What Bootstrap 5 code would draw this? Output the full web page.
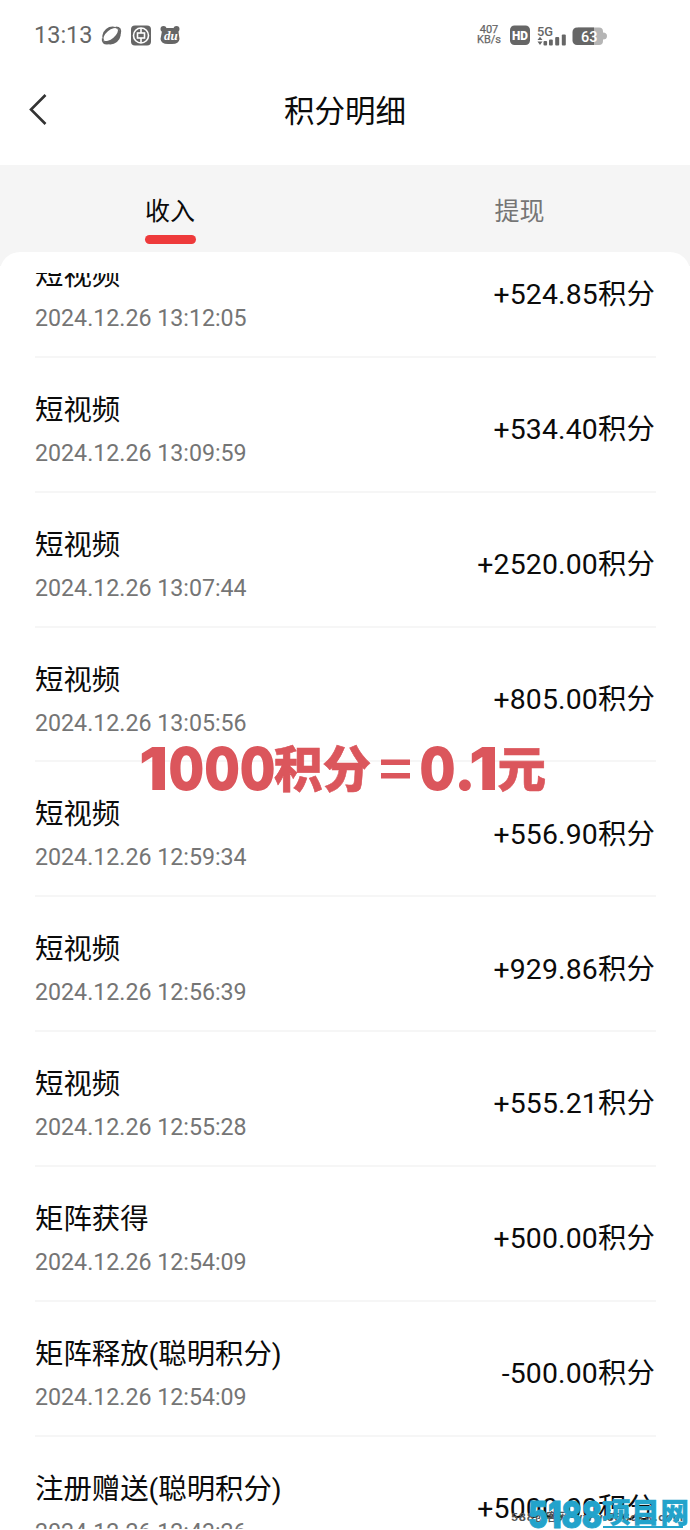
<!DOCTYPE html>
<html lang="zh-CN">
<head>
<meta charset="utf-8">
<meta name="viewport" content="width=device-width, initial-scale=1">
<title>积分明细</title>
<link href="https://cdn.jsdelivr.net/npm/bootstrap@5.3.0/dist/css/bootstrap.min.css" rel="stylesheet">
<style>
body{width:690px;height:1530px;overflow:hidden;background:#fff;color:#0b0b0b;font-family:Roboto,"Noto Sans CJK SC",sans-serif}
.status{height:70px;padding-left:34px;color:#666}
.clock{font-size:23.5px;width:67px;line-height:70px}
.rate{font-size:11px;line-height:10.5px;width:24px;text-align:center;margin-left:auto;-webkit-text-stroke:.25px #666}
.title-bar{height:95px;padding:0 28px 11px}
.title-bar h1{font-size:30.5px;line-height:40px;font-weight:400;margin:0}
.back{width:20px;height:32px;margin-bottom:7px}
.tabs{height:101px;background:#f5f5f5;padding-top:26px}
.tab-name{font-size:25px;line-height:42px;color:#757575}
.tab-name.on{color:#0b0b0b;margin-right:1px}
.tab-line{width:51px;height:9px;border-radius:5px;background:#ee3a3b;margin-top:2px}
.sheet{height:1279px;margin-top:-14px;background:#fff;border-radius:20px 20px 0 0;padding:21px 34px 0 35px}
.scroller{height:1256px;overflow:hidden}
.entry{height:134.85px;border-bottom:2px solid #f6f6f6;padding-top:32px}
.entries{margin-top:-50px}
.entry-name{font-size:28.4px;line-height:42px}
.entry-time{font-size:23.2px;line-height:32px;margin-top:5px;color:#757575}
.amount{font-size:28.4px;line-height:42px;margin-top:19.4px;padding-right:1px;letter-spacing:.16px}
.note{left:130px;top:730px}
.site{left:505px;top:1490px}
.heavy{font-family:Inter,"Noto Sans CJK SC",sans-serif;font-weight:900}
</style>
</head>
<body class="position-relative">
<header class="status d-flex align-items-center">
<span class="clock">13:13</span>
<svg width="82" height="24" viewBox="101 23 82 24" fill="#666">
<g transform="rotate(-40 111.500 35.500)"><ellipse cx="111.500" cy="35.500" rx="9.600" ry="8.500"/><ellipse cx="111.500" cy="34.200" rx="8.800" ry="4.300" fill="#fff"/><path d="M104 39.500Q98.500 36 103 32M119 39.500Q124.500 36 120 32" fill="none" stroke="#666" stroke-width="1.800"/></g>
<rect x="131" y="25.500" width="20" height="20" rx="4"/>
<g fill="none" stroke="#fff" stroke-width="1.600"><circle cx="141" cy="35.500" r="7.500"/><rect x="137.500" y="33" width="7" height="5"/><path d="M141 28v5M141 38v5"/></g>
<circle cx="163.500" cy="29" r="3"/><circle cx="176.500" cy="29" r="3"/><path d="M162 31Q163 28 167 28H173Q178 28 178.500 32L179.500 39Q179 44 172 44H168Q161 44 160.500 39Z"/>
<text x="164" y="40" font-family="Liberation Serif" font-style="italic" font-weight="700" font-size="13" fill="#fff">du</text>
</svg>
<span class="rate">407<br>KB/s</span>
<svg width="189" height="30" viewBox="501 20 189 30" fill="#666">
<rect x="510" y="25.500" width="20" height="19.500" rx="4.500"/>
<text x="512" y="40" font-family="Roboto" font-weight="900" font-size="13" textLength="16" lengthAdjust="spacingAndGlyphs" fill="#fff">HD</text>
<text x="537" y="35.500" font-family="Roboto" font-weight="500" font-size="13.500" textLength="16" lengthAdjust="spacingAndGlyphs">5G</text>
<path d="M537.500 40l2.500-3.200 2.500 3.200zM537.500 41.500h5L540 45z"/>
<rect x="543.500" y="41" width="3.600" height="4.500" rx="1"/><rect x="549" y="39.500" width="3.800" height="6" rx="1"/><rect x="555.200" y="37" width="4" height="8.500" rx="1"/><rect x="561.800" y="34.500" width="4" height="11" rx="1"/>
<path d="M578 27.500H599a4 4 0 0 1 4 4v1q4 0 4 3.500t-4 3.500v1.500a4 4 0 0 1-4 4H578z" fill="#b5b5b5"/>
<path d="M577 27.500H594V45H577a4.500 4.500 0 0 1-4.500-4.500V32a4.500 4.500 0 0 1 4.500-4.500z"/>
<text x="581" y="41.500" font-family="Roboto" font-weight="500" font-size="15" textLength="16.500" lengthAdjust="spacingAndGlyphs" fill="#fff">63</text>
</svg>
</header>
<div class="title-bar d-flex align-items-center">
<svg class="back" viewBox="0 0 20 32" fill="none" stroke="#333" stroke-width="2.600"><path d="M17.500 2 3 16.500 17.500 31"/></svg>
<h1 class="flex-grow-1 text-center">积分明细</h1><span class="back"></span>
</div>
<nav class="tabs d-flex justify-content-between"><div class="d-flex flex-column align-items-center w-50 pe-1"><span class="tab-name on">收入</span><span class="tab-line"></span></div><div class="w-50 text-center ps-1"><span class="tab-name">提现</span></div></nav>
<main class="sheet"><div class="scroller"><div class="entries">
<div class="entry d-flex justify-content-between"><div><div class="entry-name">短视频</div><div class="entry-time">2024.12.26 13:12:05</div></div><div class="amount">+524.85积分</div></div>
<div class="entry d-flex justify-content-between"><div><div class="entry-name">短视频</div><div class="entry-time">2024.12.26 13:09:59</div></div><div class="amount">+534.40积分</div></div>
<div class="entry d-flex justify-content-between"><div><div class="entry-name">短视频</div><div class="entry-time">2024.12.26 13:07:44</div></div><div class="amount">+2520.00积分</div></div>
<div class="entry d-flex justify-content-between"><div><div class="entry-name">短视频</div><div class="entry-time">2024.12.26 13:05:56</div></div><div class="amount">+805.00积分</div></div>
<div class="entry d-flex justify-content-between"><div><div class="entry-name">短视频</div><div class="entry-time">2024.12.26 12:59:34</div></div><div class="amount">+556.90积分</div></div>
<div class="entry d-flex justify-content-between"><div><div class="entry-name">短视频</div><div class="entry-time">2024.12.26 12:56:39</div></div><div class="amount">+929.86积分</div></div>
<div class="entry d-flex justify-content-between"><div><div class="entry-name">短视频</div><div class="entry-time">2024.12.26 12:55:28</div></div><div class="amount">+555.21积分</div></div>
<div class="entry d-flex justify-content-between"><div><div class="entry-name">矩阵获得</div><div class="entry-time">2024.12.26 12:54:09</div></div><div class="amount">+500.00积分</div></div>
<div class="entry d-flex justify-content-between"><div><div class="entry-name">矩阵释放(聪明积分)</div><div class="entry-time">2024.12.26 12:54:09</div></div><div class="amount">-500.00积分</div></div>
<div class="entry d-flex justify-content-between"><div><div class="entry-name">注册赠送(聪明积分)</div><div class="entry-time">2024.12.26 12:43:26</div></div><div class="amount">+5000.00积分</div></div>
</div></div></main>
<svg class="note position-absolute heavy" width="430" height="80" viewBox="130 730 430 80" fill="#db565c">
<text y="790" font-size="58.500"><tspan x="139" textLength="29" lengthAdjust="spacingAndGlyphs">1</tspan><tspan x="168.500" textLength="107" lengthAdjust="spacingAndGlyphs">000</tspan></text>
<text x="274" y="786.500" font-size="48.500" stroke="#db565c" stroke-width=".6">积分</text>
<path d="M381 759.500h29v5.500h-29zM381 773h29v5.500h-29z"/>
<text y="790" font-size="58.500"><tspan x="419.500" textLength="36" lengthAdjust="spacingAndGlyphs">0</tspan><tspan x="454">.</tspan><tspan x="469" textLength="29" lengthAdjust="spacingAndGlyphs">1</tspan></text>
<text x="497.500" y="786.500" font-size="48.500" stroke="#db565c" stroke-width=".6">元</text>
</svg>
<svg class="site position-absolute heavy" width="185" height="40" viewBox="505 1490 185 40" fill="#23a3cb">
<text x="511" y="1521" font-size="11" font-weight="700" fill="#555" textLength="172">588创客网 www.588ckw.com</text>
<text x="528" y="1528" font-size="36.500" textLength="74" lengthAdjust="spacingAndGlyphs" stroke="#23a3cb" stroke-width=".8">5188</text>
<text x="602" y="1523" font-size="28.500" textLength="87" stroke="#23a3cb" stroke-width=".3">项目网</text>
<path d="M603 1526h80v2h-80z"/>
</svg>
<script src="https://cdn.jsdelivr.net/npm/bootstrap@5.3.0/dist/js/bootstrap.bundle.min.js"></script>
</body>
</html>
